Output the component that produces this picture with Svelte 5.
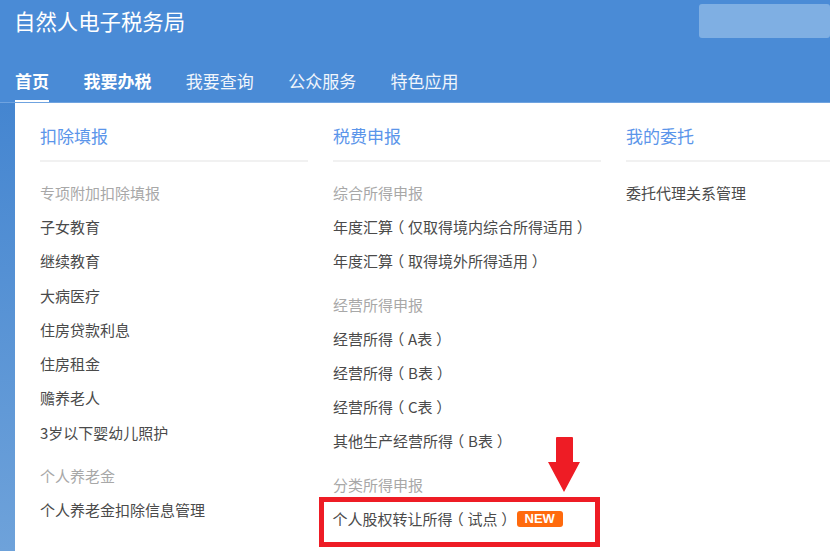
<script>
    const columns = [
        {
            title: "扣除填报",
            groups: [
                { label: "专项附加扣除填报", items: ["子女教育", "继续教育", "大病医疗", "住房贷款利息", "住房租金", "赡养老人", "3岁以下婴幼儿照护"] },
                { label: "个人养老金", items: ["个人养老金扣除信息管理"] }
            ]
        },
        {
            title: "税费申报",
            groups: [
                { label: "综合所得申报", items: ["年度汇算（仅取得境内综合所得适用）", "年度汇算（取得境外所得适用）"] },
                { label: "经营所得申报", items: ["经营所得（A表）", "经营所得（B表）", "经营所得（C表）", "其他生产经营所得（B表）"] },
                { label: "分类所得申报", items: [] }
            ]
        },
        {
            title: "我的委托",
            groups: [{ label: "", items: ["委托代理关系管理"] }]
        }
    ];
    const tabs = ["首页", "我要办税", "我要查询", "公众服务", "特色应用"];

    // parens sit centred in their cell, so they get their own span
    const parts = (text) => text.split(/([（）])/).filter(Boolean);
</script>

{#snippet label(text)}
    {#each parts(text) as part}
        {#if part === "（" || part === "）"}<span class="paren">{part}</span>{:else}{part}{/if}
    {/each}
{/snippet}

<div class="page">
    <header>
        <div class="top">
            <div class="brand">自然人电子税务局</div>
            <div class="search"></div>
        </div>
        <nav>
            {#each tabs as tab, i}
                <span class="tab" class:active={i === 0} class:bold={i < 2}>{tab}</span>
            {/each}
        </nav>
    </header>
    <div class="body">
        <div class="panel">
            {#each columns as col}
                <section class="col">
                    <h3>{col.title}</h3>
                    {#each col.groups as group}
                        {#if group.label}
                            <div class="label">{group.label}</div>
                        {/if}
                        {#each group.items as item}
                            <div class="item">{@render label(item)}</div>
                        {/each}
                        {#if group.items.length === 0}
                            <div class="callout">
                                <span class="item inline">{@render label("个人股权转让所得（试点）")}</span>
                                <span class="new">NEW</span>
                                <svg class="arrow" width="32" height="55" viewBox="0 0 32 55">
                                    <path d="M8 1 Q8 0 9 0 H24 Q25 0 25 1 V25 H32 L16 55 L0 25 H8 Z" fill="#ee1c25" />
                                </svg>
                            </div>
                        {/if}
                    {/each}
                </section>
            {/each}
        </div>
    </div>
</div>

<style>
    :global(body) {
        margin: 0;
    }

    .page {
        width: 830px;
        height: 551px;
        overflow: hidden;
        display: flex;
        flex-direction: column;
        font-family: "Noto Sans CJK SC", "Liberation Sans", sans-serif;
        background: linear-gradient(#3b7fce, #6ea2da);
    }

    header {
        height: 102px;
        flex: none;
        background: #4a8bd6;
        color: #fff;
        box-sizing: border-box;
        padding: 0 0 0 15px;
        box-shadow: 0 1px 0 #6fa3e0;
        position: relative;
    }

    .top {
        height: 67px;
        display: flex;
        justify-content: space-between;
        align-items: flex-start;
    }

    .brand {
        font-size: 21.4px;
        line-height: 24px;
        padding-top: 9px;
        margin-left: -1px;
    }

    .search {
        width: 131px;
        height: 34px;
        margin-top: 4px;
        background: #7fafe3;
        border-radius: 3px;
    }

    nav {
        display: flex;
        gap: 34.4px;
    }

    .tab {
        font-size: 17px;
        line-height: 28px;
        height: 35px;
        box-sizing: border-box;
        color: #f0f5fc;
    }

    .tab.bold {
        font-weight: 700;
        color: #fff;
    }

    .tab.active {
        border-bottom: 2px solid #fff;
    }

    .body {
        flex: 1;
        min-height: 0;
        padding-left: 15px;
    }

    .panel {
        background: #fff;
        height: 100%;
        box-sizing: border-box;
        padding: 21px 0 0 25px;
        display: flex;
        gap: 25px;
    }

    .col {
        width: 268px;
        flex: none;
    }

    h3 {
        margin: 0 0 14px;
        padding-bottom: 12px;
        font-size: 17px;
        line-height: 25px;
        font-weight: 400;
        color: #5b95ea;
        border-bottom: 2px solid #f1f1f1;
    }

    .label {
        font-size: 15px;
        line-height: 34px;
        color: #a8a8a8;
    }

    .item {
        font-size: 15px;
        line-height: 34.3px;
        color: #4a4a4a;
    }

    .item.inline {
        line-height: 28px;
        white-space: nowrap;
    }

    .paren {
        font-feature-settings: "halt";
        padding: 0 0.25em;
    }

    .item + .label {
        margin-top: 9px;
    }

    .callout {
        position: relative;
        display: flex;
        align-items: center;
        width: 262px;
        height: 35px;
        margin: -5px 0 0 -14.5px;
        padding: 0 0 5px 9px;
        border: 5px solid #ee1c25;
        box-sizing: content-box;
    }

    .new {
        margin-left: 4px;
        padding: 0 8px;
        font: 700 13px/16px "Liberation Sans", sans-serif;
        color: #fff;
        background: #ff6a0d;
        border-radius: 3px;
    }

    .arrow {
        position: absolute;
        left: 224px;
        top: -65px;
    }
</style>
